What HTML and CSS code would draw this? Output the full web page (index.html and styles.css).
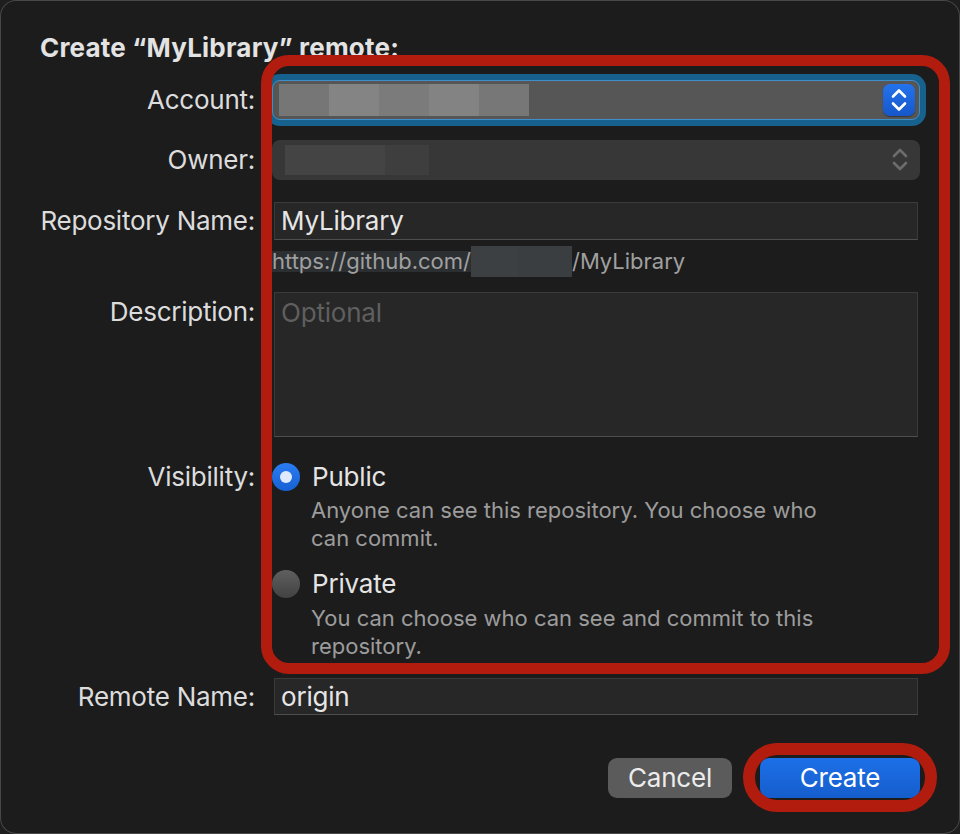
FILE: index.html
```html
<!DOCTYPE html>
<html lang="en">
<head>
<meta charset="utf-8">
<title>Create remote</title>
<link rel="stylesheet" href="styles.css">
</head>
<body>
<div class="window">
  <h1 class="title">Create “MyLibrary” remote:</h1>

  <div class="row row-account">
    <div class="label">Account:</div>
    <div class="popup popup-focus">
      <div class="redact redact-account">
        <span class="px px1"></span><span class="px px2"></span><span class="px px3"></span><span class="px px4"></span><span class="px px5"></span>
      </div>
      <div class="stepper">
        <svg width="32" height="32" viewBox="0 0 32 32"><path d="M10 12.5 L16 6.5 L22 12.5 M10 19.5 L16 25.5 L22 19.5" fill="none" stroke="#ffffff" stroke-width="2.6" stroke-linecap="round" stroke-linejoin="round"/></svg>
      </div>
    </div>
  </div>

  <div class="row row-owner">
    <div class="label">Owner:</div>
    <div class="popup popup-disabled">
      <div class="redact redact-owner">
        <span class="opx opx1"></span><span class="opx opx2"></span>
      </div>
      <div class="stepper stepper-off">
        <svg width="32" height="40" viewBox="0 0 32 40"><path d="M10 16 L16 10 L22 16 M10 23 L16 29 L22 23" fill="none" stroke="#6c6c6c" stroke-width="2.6" stroke-linecap="round" stroke-linejoin="round"/></svg>
      </div>
    </div>
  </div>

  <div class="row row-repo">
    <div class="label">Repository Name:</div>
    <div class="field">MyLibrary</div>
  </div>

  <div class="row row-url">
    <div></div>
    <div class="url"><span class="url-sel">https://github.com/</span><span class="url-blur"></span><span class="url-rest">/MyLibrary</span></div>
  </div>

  <div class="row row-desc">
    <div class="label label-top">Description:</div>
    <div class="field field-area"><span class="placeholder">Optional</span></div>
  </div>

  <div class="row row-vis">
    <div class="label label-vis">Visibility:</div>
    <div class="radios">
      <div class="option">
        <span class="radio radio-on"></span>
        <span class="option-name">Public</span>
      </div>
      <p class="option-desc">Anyone can see this repository. You choose who<br>can commit.</p>
      <div class="option option-private">
        <span class="radio radio-off"></span>
        <span class="option-name">Private</span>
      </div>
      <p class="option-desc option-desc-private">You can choose who can see and commit to this<br>repository.</p>
    </div>
  </div>

  <div class="row row-remote">
    <div class="label">Remote Name:</div>
    <div class="field field-remote">origin</div>
  </div>

  <div class="buttons">
    <div class="btn btn-cancel">Cancel</div>
    <div class="btn btn-create">Create</div>
  </div>

  <div class="annot annot-fields"></div>
  <div class="annot annot-create"></div>
</div>
</body>
</html>
```

FILE: styles.css
```css
* { box-sizing: border-box; }

html, body {
  margin: 0;
  padding: 0;
  background: #1e1e1e;
}

body {
  font-family: Inter, "Noto Sans", "Liberation Sans", sans-serif;
}

.window {
  position: relative;
  width: 960px;
  height: 834px;
  background: #1c1c1c;
  border-radius: 16px;
  box-shadow: inset 0 0 0 1px #474747;
  overflow: hidden;
  color: #dedede;
}

.title {
  margin: 0;
  padding: 32px 0 0 40px;
  font-size: 26px;
  line-height: 31px;
  font-weight: 700;
  letter-spacing: 0.2px;
  color: #e3e3e3;
}

.row {
  display: grid;
  grid-template-columns: 255px 648px;
  column-gap: 17px;
  align-items: center;
}

.label {
  text-align: right;
  font-size: 26px;
  line-height: 28px;
  letter-spacing: -0.25px;
  color: #dcdcdc;
}

.label-top { align-self: start; padding-top: 6px; }
.label-vis { align-self: start; }

.row-account { margin-top: 17px; }
.row-owner { margin-top: 20px; }
.row-repo { margin-top: 22px; }
.row-url { margin-top: 7px; }
.row-desc { margin-top: 17px; }
.row-vis { margin-top: 26px; }
.row-remote { margin-top: 18px; }

/* popups */
.popup {
  height: 40px;
  border-radius: 8px;
  display: flex;
  align-items: center;
  justify-content: space-between;
  padding: 0 4px 0 6px;
}

.popup-focus {
  background: #565656;
  border: 1px solid #3e8ec8;
  box-shadow: 0 0 0 6px #17618e;
}

.popup-disabled {
  background: #373737;
  padding-left: 13px;
}

.redact {
  display: flex;
}

.px { width: 50px; height: 32px; }
.px1 { background: #767676; }
.px2 { background: #848484; }
.px3 { background: #7b7b7b; }
.px4 { background: #838383; }
.px5 { background: #777777; }

.opx { height: 30px; }
.opx1 { width: 100px; background: #444444; }
.opx2 { width: 44px; background: #3e3e3e; }

.stepper {
  width: 32px;
  height: 32px;
  border-radius: 7px;
  background: linear-gradient(#2473ec, #1557cb);
  box-shadow: 0 1px 1px rgba(0, 0, 0, 0.35);
  display: flex;
}

.stepper-off {
  height: 40px;
  background: none;
  box-shadow: none;
}

/* text fields */
.field {
  margin-left: 2px;
  width: 644px;
  height: 38px;
  background: #272727;
  border: 1px solid #3a3a3a;
  border-bottom-color: #4e4e4e;
  padding: 0 6px;
  font-size: 26px;
  line-height: 36px;
  letter-spacing: -0.2px;
  color: #e6e6e6;
}

.field-area {
  height: 145px;
  align-self: start;
  line-height: 40px;
  padding-top: 0;
}

.field-remote { height: 37px; line-height: 35px; }

.placeholder { color: #5f5f5f; }

/* url */
.url {
  display: flex;
  align-items: center;
  height: 28px;
  font-size: 22px;
  color: #a0a0a0;
}

.url-sel {
  display: inline-block;
  height: 21px;
  line-height: 21px;
  background: #2c2f31;
}

.url-blur {
  display: inline-block;
  width: 101px;
  height: 31px;
  background: linear-gradient(90deg, #3d4043 0 47%, #3b3e40 47% 100%);
}

/* radios */
.radios {
  align-self: start;
}

.option {
  display: flex;
  align-items: center;
  gap: 12px;
  height: 28px;
}

.option-private { margin-top: 18px; }

.radio {
  width: 28px;
  height: 28px;
  border-radius: 50%;
  display: flex;
  align-items: center;
  justify-content: center;
}

.radio-on {
  background: linear-gradient(#2b7cf2, #1660d2);
}

.radio-on::after {
  content: "";
  width: 12px;
  height: 12px;
  border-radius: 50%;
  background: #e0eafc;
}

.radio-off {
  background: linear-gradient(#5f5f5f, #424242);
}

.option-name {
  font-size: 26px;
  line-height: 28px;
  letter-spacing: -0.2px;
  color: #e4e4e4;
}

.option-desc {
  margin: 5px 0 0 39px;
  font-size: 22px;
  line-height: 28px;
  color: #9c9c9c;
}

.option-desc-private { margin-top: 6px; }

/* buttons */
.buttons {
  display: flex;
  justify-content: flex-end;
  gap: 28px;
  margin-top: 43px;
  padding-right: 40px;
}

.btn {
  height: 40px;
  border-radius: 9px;
  font-size: 26px;
  line-height: 39px;
  letter-spacing: -0.2px;
  text-align: center;
  color: #ececec;
}

.btn-cancel {
  width: 124px;
  background: #5b5b5b;
}

.btn-create {
  width: 160px;
  background: linear-gradient(#1d70e8, #155dcc);
  color: #ffffff;
}

/* red annotation outlines drawn over the dialog */
.annot {
  position: absolute;
  border-style: solid;
  border-color: #b21c0e;
  pointer-events: none;
}

.annot-fields {
  left: 261px;
  top: 55px;
  width: 689px;
  height: 619px;
  border-width: 11px;
  border-radius: 28px;
}

.annot-create {
  left: 743px;
  top: 743px;
  width: 194px;
  height: 69px;
  border-width: 12px;
  border-radius: 35px;
}
```
